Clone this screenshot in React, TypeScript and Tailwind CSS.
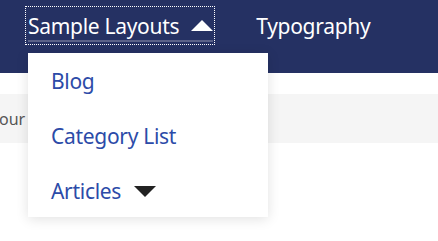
export default function App() {
  const font = { fontFamily: '"Noto Sans", "Open Sans", sans-serif' };
  return (
    <div className="relative w-[438px] h-[241px] bg-white overflow-hidden" style={font}>
      <header className="h-[73px] bg-[#253163] flex items-start pt-[6px] pl-[25px] text-[21px] tracking-[-0.3px]">
        <div className="relative">
          <button className="relative flex items-start h-[39px] pl-[2px] pr-[1px] pt-[5px] border border-dotted border-white text-white leading-[28px]">
            <span>Sample Layouts</span>
            <svg width="22" height="12" viewBox="0 0 22 12" className="ml-[12px] mt-[8px]">
              <polygon points="11,0 22,11 0,11" fill="white" />
            </svg>
            <span className="absolute left-[2px] right-[1px] top-[33px] h-[2px] bg-[#5b6289]" />
          </button>
          <div className="absolute left-[3px] top-[47px] w-[240px] h-[164px] bg-white shadow-[0_2px_12px_rgba(0,0,0,0.12)] z-10 flex flex-col pl-[23px] pt-[1px] text-[#2c4ba8] leading-[55px]">
            <div className="h-[55px]">Blog</div>
            <div className="h-[55px]">Category List</div>
            <div className="h-[53px] flex items-start">
              <span>Articles</span>
              <svg width="22" height="12" viewBox="0 0 22 12" className="ml-[13px] mt-[22px]">
                <polygon points="0,0 22,0 11,11" fill="#222" />
              </svg>
            </div>
          </div>
        </div>
        <div className="ml-[41px] pt-[6px] leading-[28px] text-white">Typography</div>
      </header>
      <div className="mt-[21px] h-[49px] bg-[#f5f5f5] flex items-center text-[16px] text-[#555]">
        <span className="-ml-[1px]">our</span>
      </div>
    </div>
  );
}
